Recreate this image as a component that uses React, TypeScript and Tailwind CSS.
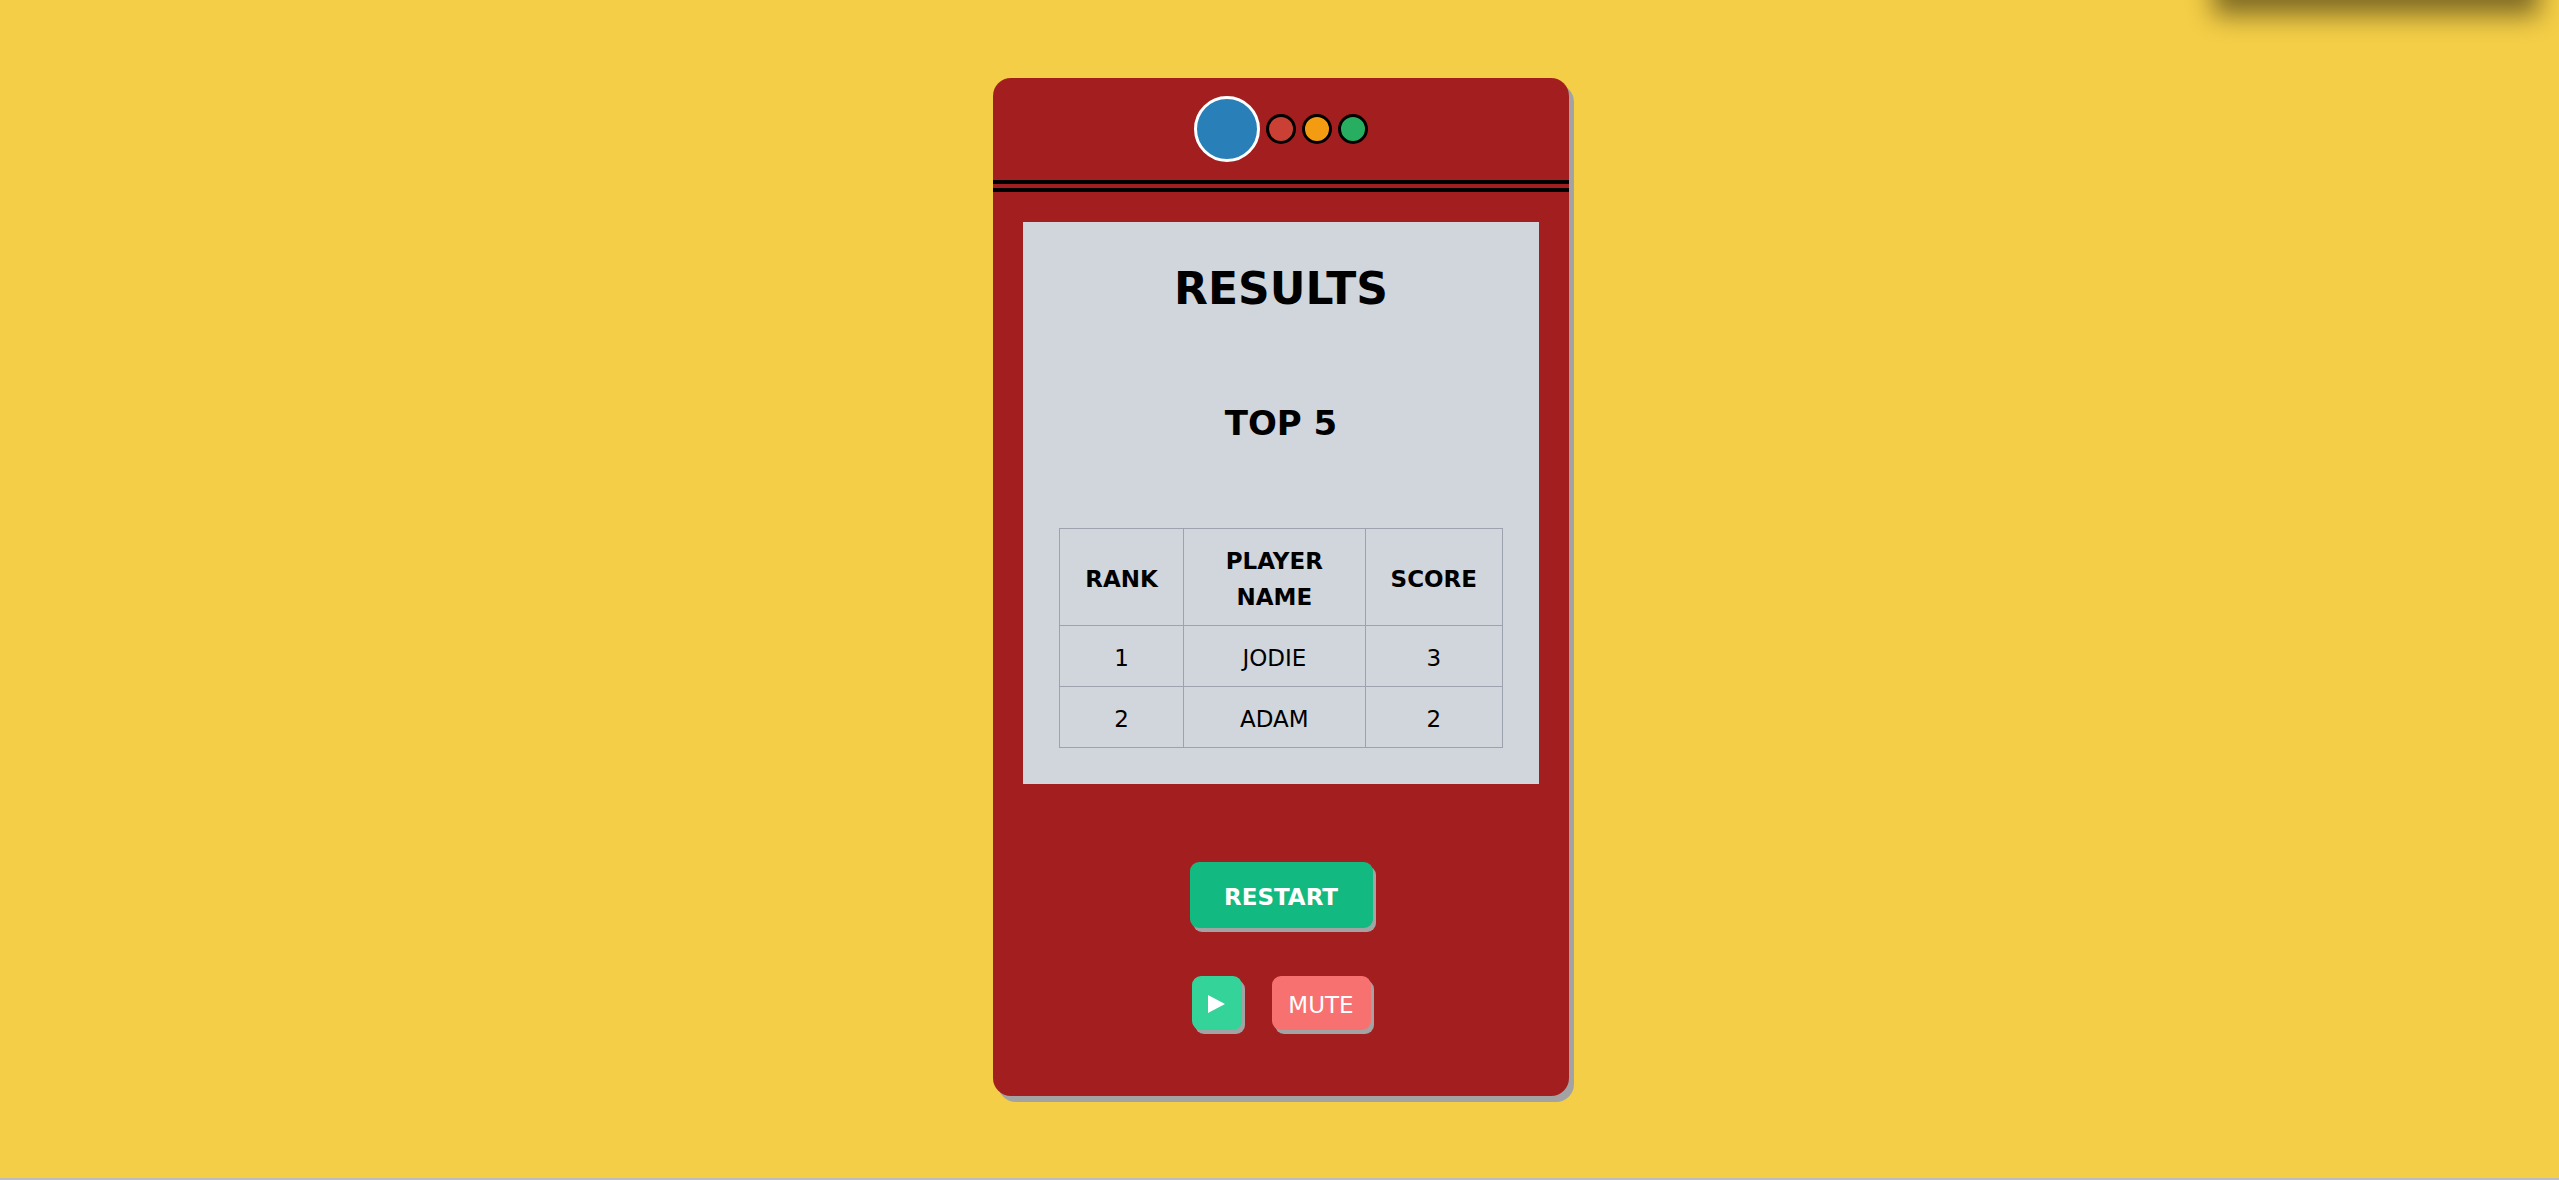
const results = [
  { rank: 1, name: "JODIE", score: 3 },
  { rank: 2, name: "ADAM", score: 2 },
];

const cell = "border border-[#9ca3af] px-5 pt-3.5 pb-2.5";

function Lights() {
  return (
    <div className="flex items-center justify-center gap-1.5 border-b-12 border-double border-black py-[18px]">
      <span className="size-[66px] rounded-full border-3 border-white bg-[#2980b9]" />
      <span className="size-[30px] rounded-full border-3 border-black bg-[#cb4035]" />
      <span className="size-[30px] rounded-full border-3 border-black bg-[#f39c12]" />
      <span className="size-[30px] rounded-full border-3 border-black bg-[#27ae60]" />
    </div>
  );
}

function ResultsTable() {
  return (
    <table className="w-full table-fixed border-collapse text-center text-[23px] leading-9">
      <colgroup>
        <col className="w-[28%]" />
        <col className="w-[41%]" />
        <col className="w-[31%]" />
      </colgroup>
      <thead>
        <tr>
          <th className={cell}>RANK</th>
          <th className={cell}>PLAYER NAME</th>
          <th className={cell}>SCORE</th>
        </tr>
      </thead>
      <tbody>
        {results.map((r) => (
          <tr key={r.rank}>
            <td className={cell}>{r.rank}</td>
            <td className={cell}>{r.name}</td>
            <td className={cell}>{r.score}</td>
          </tr>
        ))}
      </tbody>
    </table>
  );
}

export default function App() {
  return (
    <div className="relative flex min-h-screen items-start justify-center overflow-hidden border-b-2 border-[#bdbdbd] bg-[#f4ce46] pt-[78px] pb-[82px] pl-[3px] font-['DejaVu_Sans',sans-serif] text-[23px] leading-9 text-black">
      <div className="absolute right-6 bottom-full h-24 w-[336px] shadow-[9px_20px_24px_-5px_rgba(0,0,0,0.48)]" />
      <main className="w-full max-w-[576px] overflow-hidden rounded-[18px] bg-[#a31f1f] pb-[66px] shadow-[5px_6px_0_#a3a3a3]">
        <Lights />
        <section className="mx-[30px] mt-[30px] bg-[#d1d5dc] px-9 pb-9 text-center">
          <h1 className="pt-[43px] text-[44px] leading-[48px] font-bold">RESULTS</h1>
          <h2 className="pt-[89px] pb-[84px] text-[34px] leading-[42px] font-bold">TOP 5</h2>
          <ResultsTable />
        </section>
        <div className="mt-[78px] flex flex-col items-center gap-12">
          <button type="button" className="h-[66px] w-[183px] rounded-[9px] bg-[#12b981] pt-1 font-bold text-white shadow-[3px_4px_0_#a3a3a3]">
            RESTART
          </button>
          <div className="flex gap-[30px]">
            <button type="button" aria-label="Play" className="flex h-[54px] w-[50px] items-center justify-center rounded-[9px] bg-[#34d399] pt-0.5 text-white shadow-[3px_4px_0_#a3a3a3]">
              <svg viewBox="0 0 17 18" className="h-[18px] w-[17px]" fill="currentColor" aria-hidden="true">
                <path d="M0 0L17 9L0 18Z" />
              </svg>
            </button>
            <button type="button" className="h-[54px] w-[99px] rounded-[9px] bg-[#f87171] pt-1 text-white shadow-[3px_4px_0_#a3a3a3]">
              MUTE
            </button>
          </div>
        </div>
      </main>
    </div>
  );
}
